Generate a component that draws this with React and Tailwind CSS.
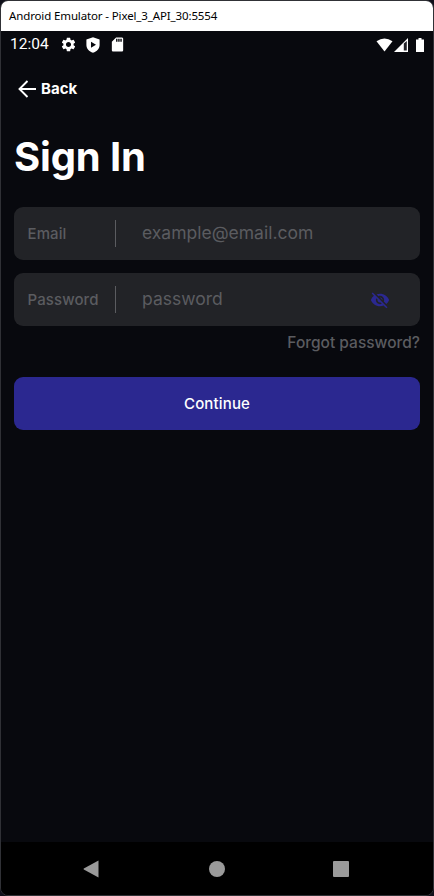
import { MdSettings, MdSdCard, MdVisibilityOff } from "react-icons/md";

function TitleBar() {
  return (
    <div className="flex h-[30px] items-center bg-white pl-2 font-['Noto_Sans','Open_Sans',sans-serif] text-[11.500px] tracking-[-0.130px] whitespace-nowrap text-black">
      Android Emulator - Pixel_3_API_30:5554
    </div>
  );
}

function StatusBar() {
  return (
    <div className="flex h-[27px] items-center pr-[9px] pl-[9px] font-[Roboto,sans-serif] text-white">
      <span className="mt-px w-[50px] text-[15.500px] leading-none">12:04</span>
      <MdSettings className="size-[17px]" />
      <svg className="ml-2 size-4" viewBox="0 0 16 16" fill="currentColor">
        <path fillRule="evenodd" d="M8 .2 14.600 2.600V8c0 3.700-2.700 6.500-6.600 7.700C4.100 14.500 1.400 11.700 1.400 8V2.600ZM6 4.800v6L11 7.800Z" />
      </svg>
      <MdSdCard className="ml-2 size-[17px]" />
      <div className="ml-auto flex items-center">
        <svg className="h-[14px] w-[17px]" viewBox="0 0 17 14" fill="currentColor">
          <path d="M.5 3.300Q8.500-2.300 16.500 3.300L8.500 13.500Z" />
        </svg>
        <svg className="ml-px size-[14px]" viewBox="0 0 14 14">
          <path d="M0 14 14 0V14Z" fill="white" />
          <path d="M9.800 5.500 12.800 3V12.500H9.800Z" fill="#222228" />
        </svg>
        <svg className="ml-2 h-[14px] w-2" viewBox="0 0 8 14" fill="currentColor">
          <path d="M2.500 0h3v1.500H8V14H0V1.500h2.500Z" />
        </svg>
      </div>
    </div>
  );
}

function Field({ label, placeholder, children }) {
  return (
    <div className="flex h-[53px] items-center rounded-[9px] bg-[#222327] pl-[13.500px] text-[#5b5c60]">
      <span className="mt-0.5 w-[87.500px] text-[15px] font-medium tracking-[0.1px]">{label}</span>
      <div className="h-[27px] w-px bg-[#5b5c60]" />
      <span className="ml-[26px] text-[17.500px]">{placeholder}</span>
      {children}
    </div>
  );
}

function NavBar() {
  return (
    <div className="flex h-[53px] items-center justify-between bg-black pr-[84px] pl-[82px] text-[#9a9a9a]">
      <svg className="size-[18px]" viewBox="0 0 18 18" fill="currentColor">
        <path d="M15.500.5v17L.8 9.500Q.2 9 .8 8.500Z" />
      </svg>
      <div className="-ml-px size-4 rounded-full bg-current" />
      <div className="size-4 rounded-[1px] bg-current" />
    </div>
  );
}

export default function App() {
  return (
    <div className="h-[896px] w-[434px] bg-[#10101a]">
      <div className="flex h-full flex-col overflow-hidden rounded-lg border border-[#303136] bg-[#08090e] font-[Inter,sans-serif]">
        <TitleBar />
        <StatusBar />
        <main className="flex flex-1 flex-col px-[13px] pt-[21px]">
          <button className="flex h-5 items-center self-start pl-1 text-[15px] font-bold text-white">
            <svg className="mr-[5px] -mt-px h-[18px] w-[18px]" viewBox="0 0 18 18" fill="none" stroke="currentColor" strokeWidth="1.900">
              <path d="M9.500 1 1.500 9l8 8M1.500 9H18" />
            </svg>
            Back
          </button>
          <h1 className="mt-[33px] h-[50px] text-[40px] leading-[50px] font-bold tracking-[-0.15px] text-white">Sign In</h1>
          <div className="mt-[25px] flex flex-col gap-[13px]">
            <Field label="Email" placeholder="example@email.com" />
            <Field label="Password" placeholder="password">
              <MdVisibilityOff className="mr-[30px] ml-auto size-5 text-[#2b2890]" />
            </Field>
          </div>
          <a className="mt-[7px] self-end text-[15.500px] leading-5 text-[#5b5c60] font-medium">Forgot password?</a>
          <button className="mt-[24px] h-[53px] rounded-[9px] bg-[#2b2890] pt-0.5 text-[15px] font-medium tracking-[0.15px] text-white">Continue</button>
        </main>
        <NavBar />
      </div>
    </div>
  );
}
